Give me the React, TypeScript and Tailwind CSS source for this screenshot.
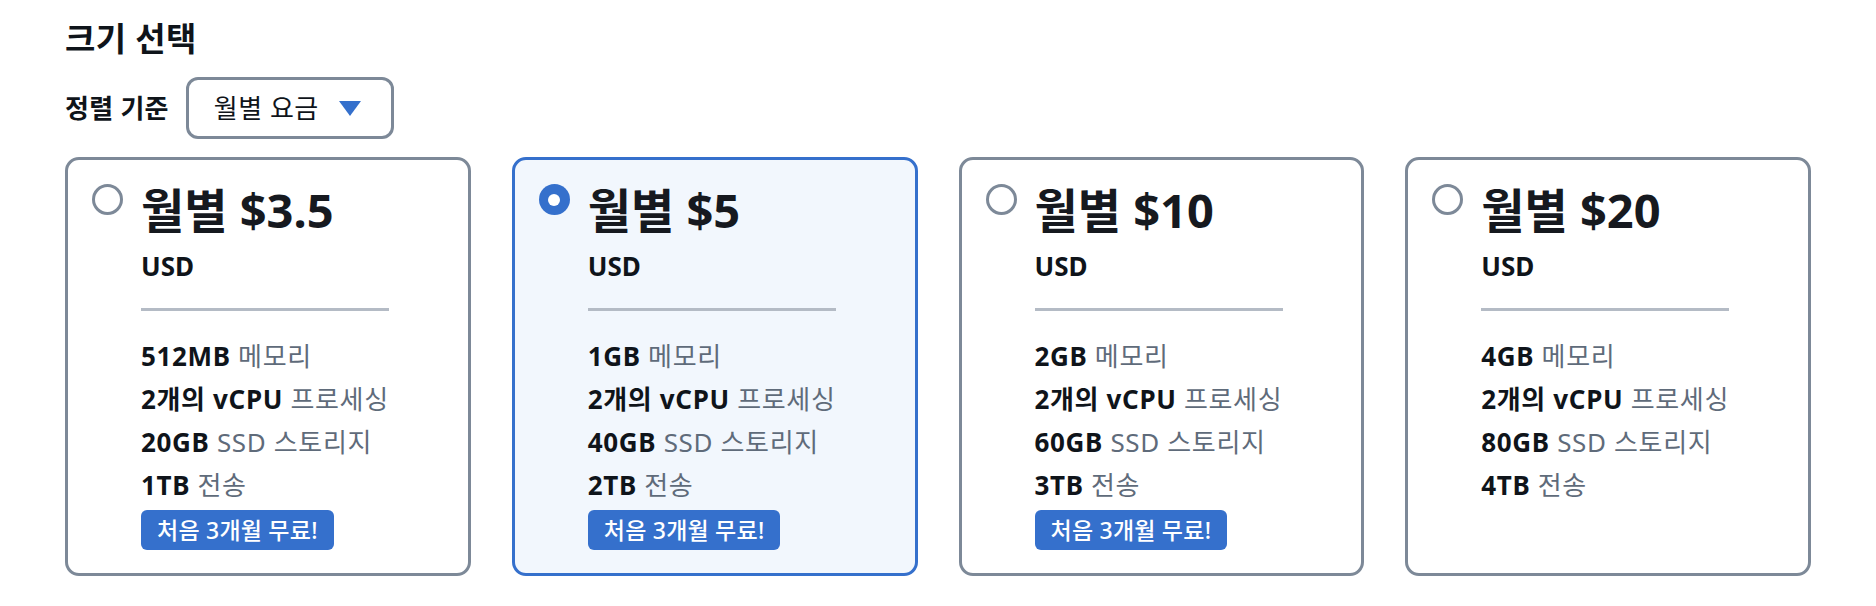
const plans = [
  { price: "$3.5", mem: "512MB", ssd: "20GB", transfer: "1TB", promo: true, selected: false },
  { price: "$5", mem: "1GB", ssd: "40GB", transfer: "2TB", promo: true, selected: true },
  { price: "$10", mem: "2GB", ssd: "60GB", transfer: "3TB", promo: true, selected: false },
  { price: "$20", mem: "4GB", ssd: "80GB", transfer: "4TB", promo: false, selected: false },
];

type Plan = (typeof plans)[number];

const PlanCard = ({ plan }: { plan: Plan }) => {
  return (
    <div
      className={
        plan.selected
          ? "flex gap-[18px] rounded-[14px] border-[3px] border-[#3570cc] bg-[#f2f7fd] pl-[24px] pt-[22px] pb-[23px]"
          : "flex gap-[18px] rounded-[14px] border-[3px] border-[#7d8998] bg-white pl-[24px] pt-[22px] pb-[23px]"
      }
    >
      {plan.selected ? (
        <div className="mt-[2px] flex h-[31px] w-[31px] shrink-0 items-center justify-center rounded-full bg-[#3570cc]">
          <div className="h-[12px] w-[12px] rounded-full bg-white" />
        </div>
      ) : (
        <div className="mt-[2px] h-[31px] w-[31px] shrink-0 rounded-full border-[3px] border-[#7d8998] bg-white" />
      )}
      <div className="flex flex-col">
        <div className="text-[47px] font-bold leading-[56px] text-[#16191f]">월별 {plan.price}</div>
        <div className="mt-[11px] text-[26px] font-bold leading-[34px] text-[#0f141a]">USD</div>
        <div className="mt-[25px] h-[3px] w-[248px] bg-[#b4bbc5]" />
        <div className="mt-[24px] flex flex-col text-[26px] leading-[43px] tracking-[0.025em] text-[#5f6b7a]">
          <div>
            <span className="font-bold text-[#0f141a]">{plan.mem}</span> 메모리
          </div>
          <div>
            <span className="font-bold text-[#0f141a]">2개의 vCPU</span> 프로세싱
          </div>
          <div>
            <span className="font-bold text-[#0f141a]">{plan.ssd}</span> SSD 스토리지
          </div>
          <div>
            <span className="font-bold text-[#0f141a]">{plan.transfer}</span> 전송
          </div>
        </div>
        {plan.promo && (
          <div className="mt-[3px] self-start rounded-[6px] bg-[#3570cc] px-[16px] text-[23px] font-medium leading-[40px] tracking-[0.01em] text-white">
            처음 3개월 무료!
          </div>
        )}
      </div>
    </div>
  );
};

export default function App() {
  return (
    <div className="h-[606px] w-full bg-white px-[65px] pt-[18px] font-['Noto_Sans','Noto_Sans_CJK_KR',sans-serif]">
      <h2 className="text-[33px] font-bold leading-[42px] tracking-[0.01em] text-[#0f141a]">크기 선택</h2>

      <div className="mt-[17px] flex items-center gap-[17px]">
        <span className="text-[26px] font-bold leading-[34px] tracking-[0.01em] text-[#0f141a]">정렬 기준</span>
        <button className="flex h-[62px] w-[208px] items-center justify-between rounded-[12px] border-[3px] border-[#7d8998] bg-white pl-[25px] pr-[30px]">
          <span className="text-[26px] leading-[34px] tracking-[0.02em] text-[#0f141a]">월별 요금</span>
          <svg width="22" height="15" viewBox="0 0 22 15">
            <polygon points="0,0 22,0 11,15" fill="#3570cc" />
          </svg>
        </button>
      </div>

      <div className="mt-[18px] grid grid-cols-4 gap-[41px]">
        {plans.map((plan) => (
          <PlanCard key={plan.price} plan={plan} />
        ))}
      </div>
    </div>
  );
}
